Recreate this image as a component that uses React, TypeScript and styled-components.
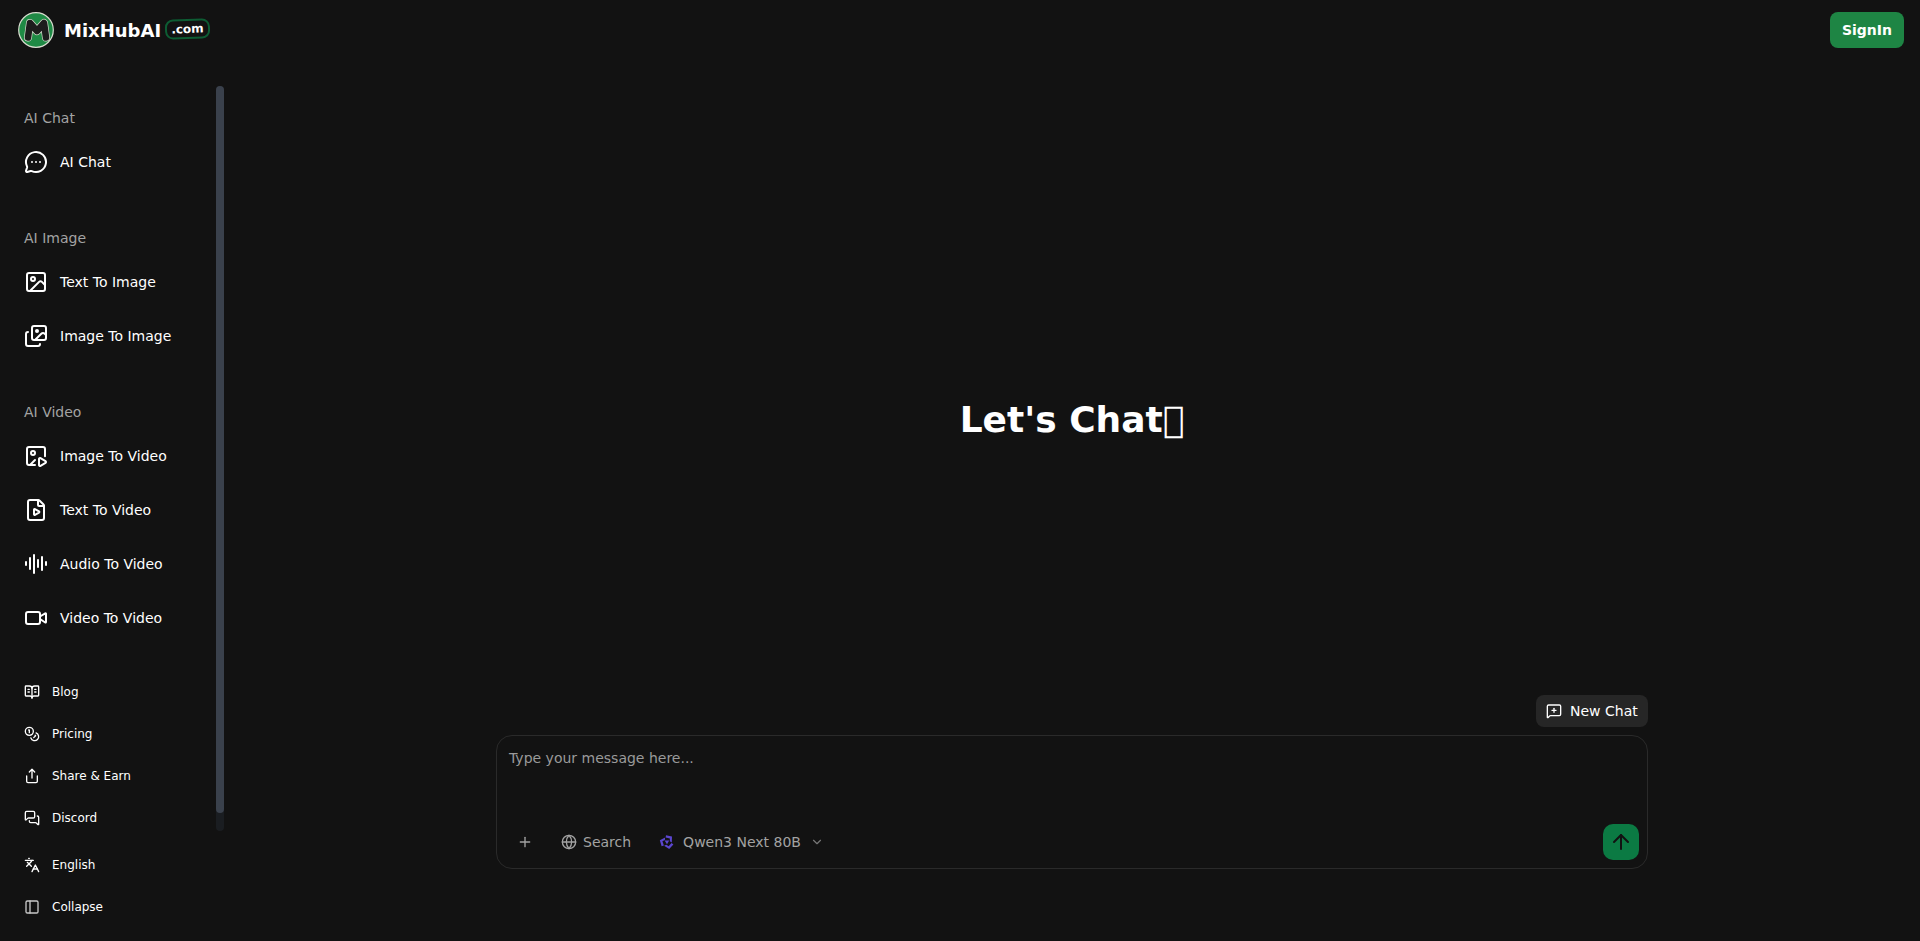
import styled, { createGlobalStyle } from "styled-components";
import {
  ArrowUp,
  AudioLines,
  BookOpenText,
  ChevronDown,
  Coins,
  FilePlay,
  Globe,
  Image,
  ImagePlay,
  Images,
  Languages,
  MessageCircleMore,
  MessageSquarePlus,
  MessagesSquare,
  PanelLeft,
  Plus,
  Share,
  Video,
} from "lucide-react";

const GlobalStyle = createGlobalStyle`
  html, body {
    margin: 0;
    height: 100%;
    background: #121212;
    color: #fff;
    font-family: "DejaVu Sans", sans-serif;
  }
  * { box-sizing: border-box; }
`;

const Page = styled.div`
  display: flex;
  flex-direction: column;
  height: 941px;
  overflow: hidden;
`;

const Header = styled.header`
  display: flex;
  align-items: center;
  justify-content: space-between;
  height: 60px;
  flex: none;
  padding: 0 16px 0 18px;
`;

const Brand = styled.div`
  display: flex;
  align-items: center;
`;

const BrandName = styled.span`
  margin-left: 10px;
  font-size: 18px;
  font-weight: 700;
`;

const Tld = styled.span`
  display: inline-flex;
  align-items: center;
  justify-content: center;
  width: 45px;
  height: 20px;
  margin: -3px 0 0 4px;
  border: 2px solid #0d5c33;
  border-radius: 8px;
  font-size: 12px;
  font-weight: 700;
  transform: rotate(-2deg);
`;

const SignIn = styled.button`
  width: 74px;
  height: 36px;
  border: 0;
  border-radius: 8px;
  background: #1e8544;
  color: #fff;
  font: 700 14px "DejaVu Sans", sans-serif;
`;

const Body = styled.div`
  display: flex;
  flex: 1;
  min-height: 0;
`;

const Sidebar = styled.aside`
  display: flex;
  flex-direction: column;
  flex: none;
  width: 224px;
`;

const NavScroll = styled.nav`
  position: relative;
  flex: none;
  height: 745px;
  margin-top: 26px;
  padding: 22px 0 0 24px;
`;

/* headless chrome hides real scrollbars, so the track is drawn over the nav */
const ScrollTrack = styled.div`
  position: absolute;
  top: 0;
  right: 0;
  bottom: 0;
  width: 8px;
  border-radius: 4px;
  background: #1a1d21;
`;

const ScrollThumb = styled.div`
  height: 727px;
  border-radius: 4px;
  background: #3a414c;
`;

const Section = styled.section`
  margin-bottom: 44px;

  &:nth-of-type(3) {
    margin-bottom: 35px;
  }
`;

const SectionLabel = styled.div`
  height: 20px;
  margin-bottom: 12px;
  font-size: 14px;
  line-height: 20px;
  color: #a3a3a3;
`;

const BigItem = styled.a`
  display: flex;
  align-items: center;
  gap: 12px;
  height: 44px;
  margin-bottom: 10px;
  font-size: 14px;
  color: #fff;

  &:last-child {
    margin-bottom: 0;
  }
`;

const SmallList = styled.div`
  display: flex;
  flex-direction: column;
  gap: 8px;
`;

const SmallItem = styled.a`
  display: flex;
  align-items: center;
  gap: 12px;
  height: 34px;
  font-size: 12px;
  color: #fff;
`;

const SidebarFoot = styled(SmallList)`
  margin-top: 17px;
  padding-left: 24px;
`;

const Main = styled.main`
  display: flex;
  flex-direction: column;
  align-items: center;
  flex: 1;
  min-width: 0;
`;

const Title = styled.h1`
  height: 44px;
  margin: 338px 0 0;
  font-size: 36px;
  line-height: 44px;
  font-weight: 700;
`;

const Composer = styled.div`
  display: flex;
  flex-direction: column;
  align-items: flex-end;
  width: 1152px;
  margin-top: 253px;
`;

const NewChat = styled.button`
  display: flex;
  align-items: center;
  gap: 8px;
  width: 112px;
  height: 32px;
  padding: 0 10px;
  border: 0;
  border-radius: 8px;
  background: #262626;
  color: #fff;
  font: 14px "DejaVu Sans", sans-serif;
`;

const InputBox = styled.div`
  display: flex;
  flex-direction: column;
  width: 100%;
  height: 134px;
  margin-top: 8px;
  border: 1px solid #2a2a2a;
  border-radius: 16px;
`;

const Prompt = styled.textarea`
  flex: 1;
  padding: 12px;
  border: 0;
  outline: 0;
  resize: none;
  background: transparent;
  color: #fff;
  font: 14px/20px "DejaVu Sans", sans-serif;

  &::placeholder {
    color: #9a9a9a;
    opacity: 1;
  }
`;

const Toolbar = styled.div`
  display: flex;
  align-items: center;
  height: 36px;
  margin-bottom: 8px;
  padding: 0 8px 0 20px;
  color: #a3a3a3;
  font-size: 14px;
`;

const ToolButton = styled.div<{ $gap?: number; $left?: number }>`
  display: flex;
  align-items: center;
  gap: ${(p) => p.$gap ?? 6}px;
  margin-left: ${(p) => p.$left ?? 0}px;
`;

const Chevron = styled(ChevronDown)`
  margin-left: 1px;
  color: #777;
`;

const Send = styled.button`
  display: flex;
  align-items: center;
  justify-content: center;
  width: 36px;
  height: 36px;
  margin-left: auto;
  padding: 0;
  border: 0;
  border-radius: 10px;
  background: #0b7a43;
  color: #121212;
`;

const LogoMark = () => (
  <svg width="36" height="36" viewBox="0 0 36 36">
    <circle cx="18" cy="18" r="17.3" fill="#1f8a45" stroke="#d8dccf" strokeWidth="1.2" />
    <path d="M10 25.5 L12 11 L19 19 L26 11 L28 25.5" fill="none" stroke="#d8dccf" strokeWidth="8" strokeLinejoin="round" strokeLinecap="round" />
    <path d="M10 25.5 L12 11 L19 19 L26 11 L28 25.5" fill="none" stroke="#1d1d1d" strokeWidth="6.6" strokeLinejoin="round" strokeLinecap="round" />
  </svg>
);

const qwenBlade = "M7 1.2 L13 2.6 L12.8 8.6 L10.8 7.2 L10.9 4.4 L6.6 3.6 Z";

const QwenIcon = () => (
  <svg width="16" height="16" viewBox="0 0 16 16" fill="#5b46cf">
    <path d={qwenBlade} />
    <path d={qwenBlade} transform="rotate(120 8 8)" />
    <path d={qwenBlade} transform="rotate(240 8 8)" />
    <path d="M5.6 6.4 L10.2 6.6 L8 10.2 Z" />
  </svg>
);

const chatItems = [{ label: "AI Chat", icon: <MessageCircleMore size={24} /> }];
const imageItems = [
  { label: "Text To Image", icon: <Image size={24} /> },
  { label: "Image To Image", icon: <Images size={24} /> },
];
const videoItems = [
  { label: "Image To Video", icon: <ImagePlay size={24} /> },
  { label: "Text To Video", icon: <FilePlay size={24} /> },
  { label: "Audio To Video", icon: <AudioLines size={24} /> },
  { label: "Video To Video", icon: <Video size={24} /> },
];
const sections = [
  { title: "AI Chat", items: chatItems },
  { title: "AI Image", items: imageItems },
  { title: "AI Video", items: videoItems },
];
const links = [
  { label: "Blog", icon: <BookOpenText size={16} /> },
  { label: "Pricing", icon: <Coins size={16} /> },
  { label: "Share & Earn", icon: <Share size={16} /> },
  { label: "Discord", icon: <MessagesSquare size={16} /> },
];

export default function App() {
  return (
    <Page>
      <GlobalStyle />
      <Header>
        <Brand>
          <LogoMark />
          <BrandName>MixHubAI</BrandName>
          <Tld>.com</Tld>
        </Brand>
        <SignIn>SignIn</SignIn>
      </Header>
      <Body>
        <Sidebar>
          <NavScroll>
            <ScrollTrack>
              <ScrollThumb />
            </ScrollTrack>
            {sections.map((section) => (
              <Section key={section.title}>
                <SectionLabel>{section.title}</SectionLabel>
                {section.items.map((item) => (
                  <BigItem key={item.label}>
                    {item.icon}
                    {item.label}
                  </BigItem>
                ))}
              </Section>
            ))}
            <SmallList>
              {links.map((link) => (
                <SmallItem key={link.label}>
                  {link.icon}
                  {link.label}
                </SmallItem>
              ))}
            </SmallList>
          </NavScroll>
          <SidebarFoot>
            <SmallItem>
              <Languages size={16} />
              English
            </SmallItem>
            <SmallItem>
              <PanelLeft size={16} color="#c8c8c8" />
              Collapse
            </SmallItem>
          </SidebarFoot>
        </Sidebar>
        <Main>
          <Title>Let's Chat{"\uE0FF"}</Title>
          <Composer>
            <NewChat>
              <MessageSquarePlus size={16} />
              New Chat
            </NewChat>
            <InputBox>
              <Prompt placeholder="Type your message here..." />
              <Toolbar>
                <Plus size={16} />
                <ToolButton $left={28} $gap={6}>
                  <Globe size={16} />
                  Search
                </ToolButton>
                <ToolButton $left={28} $gap={8}>
                  <QwenIcon />
                  Qwen3 Next 80B
                  <Chevron size={14} />
                </ToolButton>
                <Send>
                  <ArrowUp size={24} />
                </Send>
              </Toolbar>
            </InputBox>
          </Composer>
        </Main>
      </Body>
    </Page>
  );
}
